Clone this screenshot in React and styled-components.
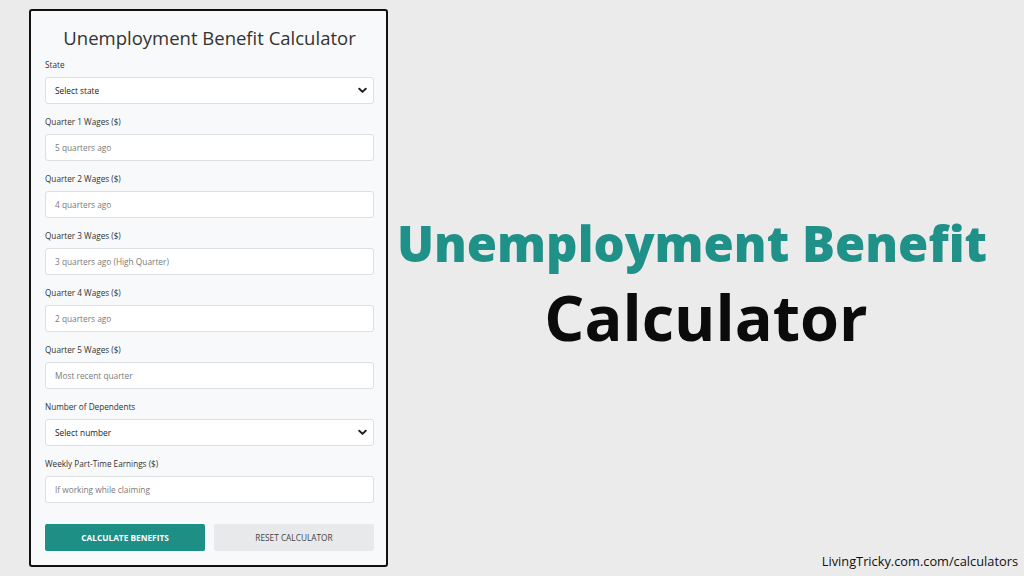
import styled, { createGlobalStyle } from "styled-components";

const Global = createGlobalStyle`
  html, body {
    margin: 0;
    padding: 0;
    background: #ebebeb;
  }
  * { box-sizing: border-box; }
`;

const Page = styled.div`
  width: 1024px;
  height: 576px;
  display: flex;
  padding: 9px 0 9px 29px;
  background: #ebebeb;
  font-family: "Open Sans", "Liberation Sans", sans-serif;
`;

const Card = styled.div`
  width: 359px;
  height: 558px;
  border: 2px solid #111;
  border-radius: 3px;
  background: #f8f9fa;
  padding: 15px 12px 0 14px;
  display: flex;
  flex-direction: column;
`;

const CardTitle = styled.h1`
  margin: 0 0 9px;
  font-size: 18.5px;
  line-height: 24px;
  font-weight: 500;
  color: #333;
  text-align: center;
`;

const Field = styled.div`
  display: flex;
  flex-direction: column;
  margin-bottom: 12px;
`;

const Label = styled.label`
  font-size: 8.2px;
  line-height: 12px;
  color: #333;
  margin-bottom: 6px;
`;

const Control = styled.div`
  height: 27px;
  background: #fff;
  border: 1px solid #dcdfe3;
  border-radius: 3px;
  display: flex;
  align-items: center;
  justify-content: space-between;
  padding: 0 6px 0 9px;
  font-size: 8.3px;
  color: ${(p) => (p.$select ? "#222" : "#7a7a7a")};
`;

const Chevron = () => (
  <svg width="9" height="7" viewBox="0 0 10 7">
    <path d="M1.4 1.5 L5 5 L8.6 1.5" fill="none" stroke="#222" strokeWidth="2.2" strokeLinecap="round" strokeLinejoin="round" />
  </svg>
);

const Buttons = styled.div`
  display: grid;
  grid-template-columns: 1fr 1fr;
  gap: 9px;
  margin-top: 9px;
`;

const Button = styled.div`
  height: 27px;
  border-radius: 2px;
  display: flex;
  align-items: center;
  justify-content: center;
  font-size: 8.3px;
  font-weight: ${(p) => (p.$primary ? 700 : 500)};
  background: ${(p) => (p.$primary ? "#1e8f85" : "#e8e9eb")};
  color: ${(p) => (p.$primary ? "#fff" : "#444")};
`;

const Side = styled.div`
  flex: 1;
  display: flex;
  flex-direction: column;
  padding-top: 204px;
`;

const Headline = styled.div`
  text-align: center;
  font-family: "Open Sans", "Liberation Sans", sans-serif;
`;

const HeadTeal = styled.div`
  color: #1f9188;
  font-size: 49px;
  font-weight: 800;
  line-height: 60px;
  padding-right: 28px;
`;

const HeadBlack = styled.div`
  color: #0b0b0b;
  font-size: 63px;
  font-weight: 700;
  line-height: 70px;
  margin-top: 9px;
`;

const Footer = styled.div`
  margin-top: auto;
  align-self: flex-end;
  padding-right: 6px;
  font-size: 12.8px;
  color: #111;
  margin-bottom: -3px;
`;

const fields = [
  { label: "State", text: "Select state", select: true },
  { label: "Quarter 1 Wages ($)", text: "5 quarters ago" },
  { label: "Quarter 2 Wages ($)", text: "4 quarters ago" },
  { label: "Quarter 3 Wages ($)", text: "3 quarters ago (High Quarter)" },
  { label: "Quarter 4 Wages ($)", text: "2 quarters ago" },
  { label: "Quarter 5 Wages ($)", text: "Most recent quarter" },
  { label: "Number of Dependents", text: "Select number", select: true },
  { label: "Weekly Part-Time Earnings ($)", text: "If working while claiming" },
];

export default function App() {
  return (
    <>
      <Global />
      <Page>
        <Card>
          <CardTitle>Unemployment Benefit Calculator</CardTitle>
          {fields.map((f) => (
            <Field key={f.label}>
              <Label>{f.label}</Label>
              <Control $select={f.select}>
                <span>{f.text}</span>
                {f.select && <Chevron />}
              </Control>
            </Field>
          ))}
          <Buttons>
            <Button $primary>CALCULATE BENEFITS</Button>
            <Button>RESET CALCULATOR</Button>
          </Buttons>
        </Card>
        <Side>
          <Headline>
            <HeadTeal>Unemployment Benefit</HeadTeal>
            <HeadBlack>Calculator</HeadBlack>
          </Headline>
          <Footer>LivingTricky.com.com/calculators</Footer>
        </Side>
      </Page>
    </>
  );
}
